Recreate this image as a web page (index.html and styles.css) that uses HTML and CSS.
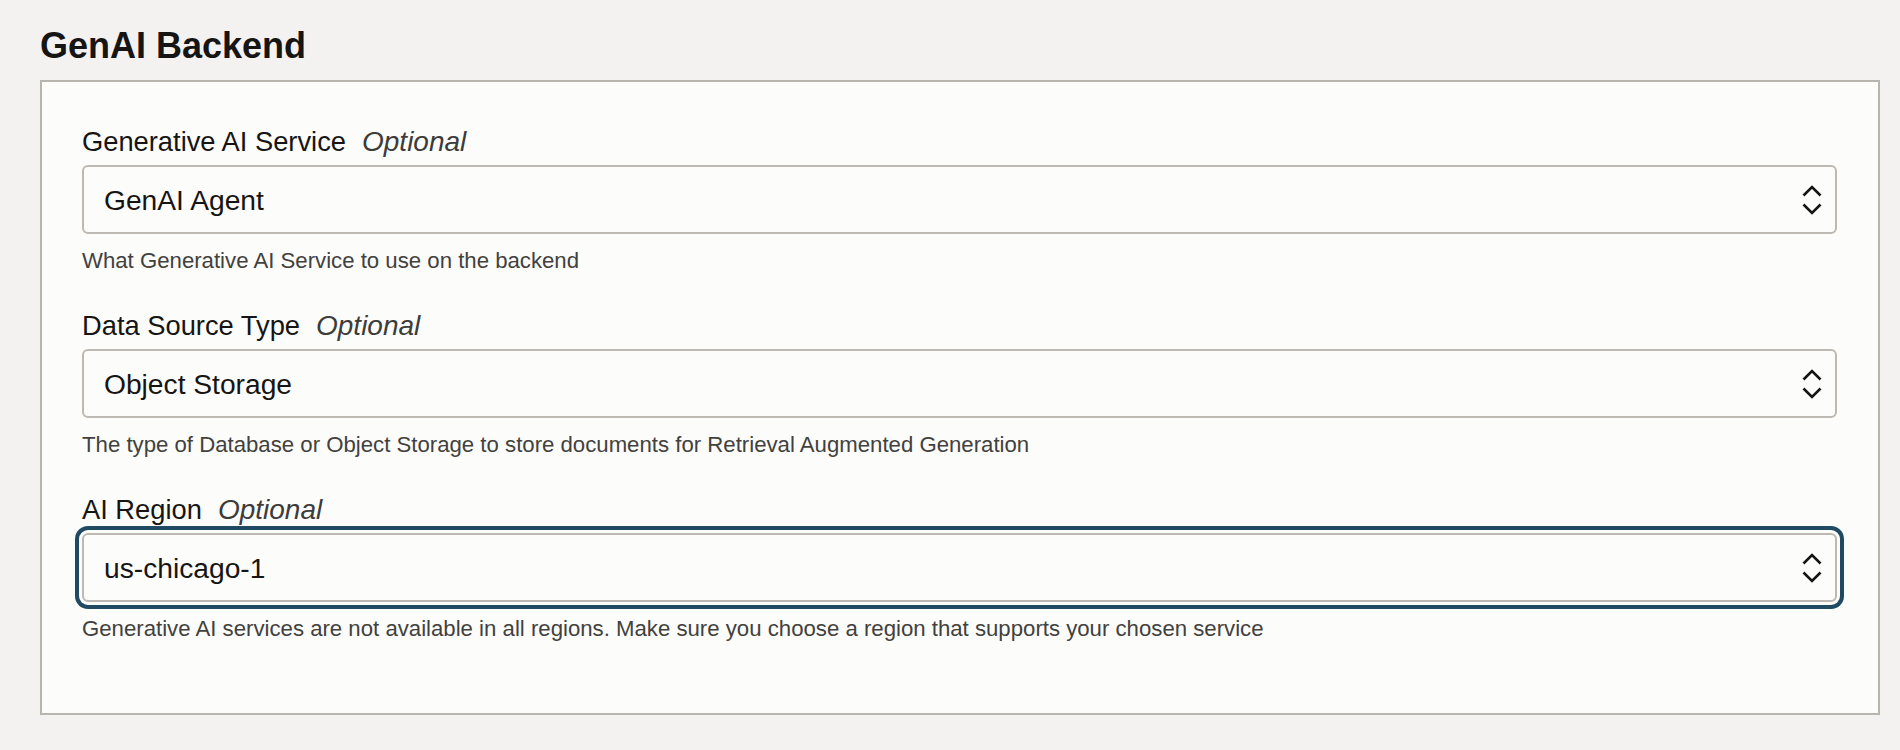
FILE: index.html
```html
<!DOCTYPE html>
<html lang="en">
<head>
<meta charset="utf-8">
<title>GenAI Backend</title>
<link rel="stylesheet" href="styles.css">
</head>
<body>
<main class="page">
  <h2 class="section-title">GenAI Backend</h2>
  <section class="panel">
    <div class="field">
      <label class="field-label">Generative AI Service<span class="optional">Optional</span></label>
      <div class="select">
        <span class="select-value">GenAI Agent</span>
        <svg class="chevrons" width="20" height="30" viewBox="0 0 20 30" aria-hidden="true"><path d="M1.5 10.5 L10 2 L18.5 10.5 M1.5 19.5 L10 28 L18.5 19.5" fill="none" stroke="#161513" stroke-width="2.6" stroke-linecap="butt" stroke-linejoin="miter"/></svg>
      </div>
      <div class="help">What Generative AI Service to use on the backend</div>
    </div>
    <div class="field">
      <label class="field-label">Data Source Type<span class="optional">Optional</span></label>
      <div class="select">
        <span class="select-value">Object Storage</span>
        <svg class="chevrons" width="20" height="30" viewBox="0 0 20 30" aria-hidden="true"><path d="M1.5 10.5 L10 2 L18.5 10.5 M1.5 19.5 L10 28 L18.5 19.5" fill="none" stroke="#161513" stroke-width="2.6" stroke-linecap="butt" stroke-linejoin="miter"/></svg>
      </div>
      <div class="help">The type of Database or Object Storage to store documents for Retrieval Augmented Generation</div>
    </div>
    <div class="field">
      <label class="field-label">AI Region<span class="optional">Optional</span></label>
      <div class="select is-focused">
        <span class="select-value">us-chicago-1</span>
        <svg class="chevrons" width="20" height="30" viewBox="0 0 20 30" aria-hidden="true"><path d="M1.5 10.5 L10 2 L18.5 10.5 M1.5 19.5 L10 28 L18.5 19.5" fill="none" stroke="#161513" stroke-width="2.6" stroke-linecap="butt" stroke-linejoin="miter"/></svg>
      </div>
      <div class="help">Generative AI services are not available in all regions. Make sure you choose a region that supports your chosen service</div>
    </div>
  </section>
</main>
</body>
</html>
```
FILE: styles.css
```css
html, body {
  margin: 0;
  padding: 0;
}

body {
  background: #f3f2f1;
  font-family: "Liberation Sans", Arial, Helvetica, sans-serif;
  color: #161513;
}

.page {
  padding: 24px 20px 0 40px;
}

.section-title {
  margin: 0 0 12px 0;
  font-size: 36px;
  line-height: 44px;
  font-weight: 700;
  color: #161513;
}

.panel {
  background: #fcfcfb;
  border: 2px solid #b8b5ae;
  padding: 44px 41px 70px 40px;
  display: flex;
  flex-direction: column;
  gap: 35px;
}

.field {
  display: flex;
  flex-direction: column;
}

.field-label {
  font-size: 27.3px;
  line-height: 32px;
  color: #161513;
  margin-bottom: 7px;
}

.optional {
  font-style: italic;
  font-size: 28px;
  color: #3d3c3a;
  margin-left: 16px;
}

.select {
  height: 69px;
  box-sizing: border-box;
  border: 2px solid #bdb9b2;
  border-radius: 6px;
  background: #fcfcfb;
  display: flex;
  align-items: center;
  justify-content: space-between;
  padding: 0 13px 0 20px;
}

.select.is-focused {
  box-shadow: 0 0 0 3px #fcfcfb, 0 0 0 7px #1f4a61;
}

.select-value {
  font-size: 28.2px;
  line-height: 34px;
  color: #161513;
}

.chevrons {
  display: block;
  flex: none;
}

.help {
  margin-top: 13px;
  font-size: 22.2px;
  line-height: 28px;
  color: #42413e;
}
```
